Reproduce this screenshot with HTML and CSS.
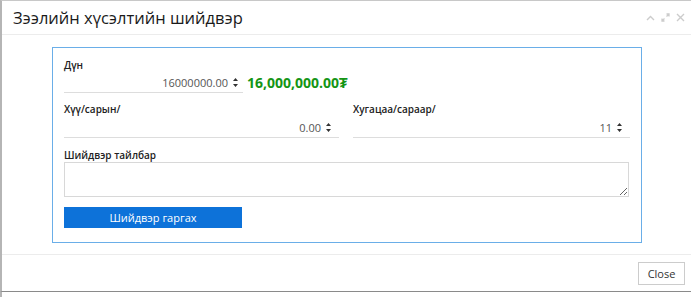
FILE: index.html
```html
<!DOCTYPE html>
<html lang="mn">
<head>
  <meta charset="UTF-8">
  <title>Зээлийн хүсэлтийн шийдвэр</title>
  <link rel="stylesheet" href="styles.css">
</head>
<body>
  <div class="modal">
    <div class="modal-header">
      <h2>Зээлийн хүсэлтийн шийдвэр</h2>
      <div class="tools">
        <svg width="9" height="6" viewBox="0 0 9 6"><path d="M1 5 L4.5 1.5 L8 5" fill="none" stroke="#ccc" stroke-width="1.4"/></svg>
        <svg width="9" height="9" viewBox="0 0 9 9"><path d="M1 8 L3.5 5.5 M5.5 3.5 L8 1 M5.5 1 H8 V3.5 M1 5.5 V8 H3.5" fill="none" stroke="#ccc" stroke-width="1.3"/></svg>
        <svg width="9" height="9" viewBox="0 0 9 9"><path d="M1 1 L8 8 M8 1 L1 8" fill="none" stroke="#ccc" stroke-width="1.4"/></svg>
      </div>
    </div>
    <div class="modal-body">
      <div class="panel">
        <label class="lbl">Дүн</label>
        <div class="amount-row">
          <div class="num-input short">
            <span>16000000.00</span>
            <svg class="spin" width="7" height="11" viewBox="0 0 7 11"><path d="M1 4 L3.5 1 L6 4 Z M1 7 L3.5 10 L6 7 Z" fill="#333"/></svg>
          </div>
          <span class="total">16,000,000.00₮</span>
        </div>
        <div class="cols">
          <div>
            <label class="lbl">Хүү/сарын/</label>
            <div class="num-input">
              <span>0.00</span>
              <svg class="spin" width="7" height="11" viewBox="0 0 7 11"><path d="M1 4 L3.5 1 L6 4 Z M1 7 L3.5 10 L6 7 Z" fill="#333"/></svg>
            </div>
          </div>
          <div>
            <label class="lbl">Хугацаа/сараар/</label>
            <div class="num-input">
              <span>11</span>
              <svg class="spin" width="7" height="11" viewBox="0 0 7 11"><path d="M1 4 L3.5 1 L6 4 Z M1 7 L3.5 10 L6 7 Z" fill="#333"/></svg>
            </div>
          </div>
        </div>
        <label class="lbl note-lbl">Шийдвэр тайлбар</label>
        <textarea class="note"></textarea>
        <button class="primary">Шийдвэр гаргах</button>
      </div>
    </div>
    <div class="modal-footer">
      <button class="close">Close</button>
    </div>
  </div>
  <div class="under">
    <span class="under-text">2020/03/11 14:15:45</span>
  </div>
</body>
</html>
```

FILE: styles.css
```css
body {
  margin: 0;
  font-family: "Open Sans", sans-serif;
  background: #fff;
  color: #333;
  overflow: hidden;
}
.modal {
  height: 292px;
  box-sizing: border-box;
  border-left: 2px solid #b5b5b5;
  border-top: 1px solid #c8c8c8;
  border-bottom: 1px solid #8a8a8a;
  background: #fff;
  display: flex;
  flex-direction: column;
}
.modal-header {
  height: 33px;
  border-bottom: 1px solid #ececec;
  display: flex;
  align-items: center;
  justify-content: space-between;
  padding: 0 6px 0 11px;
}
.modal-header h2 {
  margin: 0;
  font-size: 16.5px;
  font-weight: 500;
  color: #1a1a1a;
}
.tools {
  display: flex;
  align-items: center;
  gap: 6px;
}
.modal-body {
  padding: 12px 49px 11px 50px;
  border-bottom: 1px solid #ececec;
}
.panel {
  border: 1px solid #6aaee8;
  padding: 11px 10px 14px 11px;
  display: flex;
  flex-direction: column;
}
.lbl {
  display: block;
  font-size: 10px;
  font-weight: 600;
  line-height: 13px;
  color: #222;
}
.amount-row {
  display: flex;
  align-items: center;
  gap: 4px;
}
.num-input {
  height: 20px;
  border-bottom: 1px solid #ddd;
  display: flex;
  align-items: center;
  justify-content: flex-end;
  gap: 4px;
  padding-right: 4px;
  font-size: 11px;
  color: #555;
}
.num-input.short {
  width: 175px;
}
.total {
  color: #159515;
  font-weight: 700;
  font-size: 14px;
}
.cols {
  display: grid;
  grid-template-columns: 275px 277px;
  gap: 14px;
  margin-top: 10px;
}
.cols .num-input {
  margin-top: 1px;
  padding-right: 7px;
}
.note-lbl {
  margin-top: 11px;
}
.note {
  height: 35px;
  box-sizing: border-box;
  width: 565px;
  border: 1px solid #d8d8d8;
  margin: 0;
  resize: vertical;
}
.primary {
  width: 178px;
  height: 21px;
  margin-top: 10px;
  background: #0d72d9;
  border: 0;
  color: #fff;
  font-family: "Open Sans", sans-serif;
  font-size: 11px;
  font-weight: 500;
}
.modal-footer {
  flex: 1;
  display: flex;
  justify-content: flex-end;
  align-items: center;
  padding-right: 6px;
}
.close {
  height: 23px;
  width: 47px;
  background: #fff;
  border: 1px solid #ccc;
  font-family: "Open Sans", sans-serif;
  font-size: 11px;
  color: #333;
}
.under {
  height: 5px;
  border-left: 2px solid #b5b5b5;
  position: relative;
  overflow: hidden;
}
.under-text {
  position: absolute;
  left: 447px;
  top: 3px;
  font-size: 11px;
  color: #333;
  line-height: 11px;
}
```
